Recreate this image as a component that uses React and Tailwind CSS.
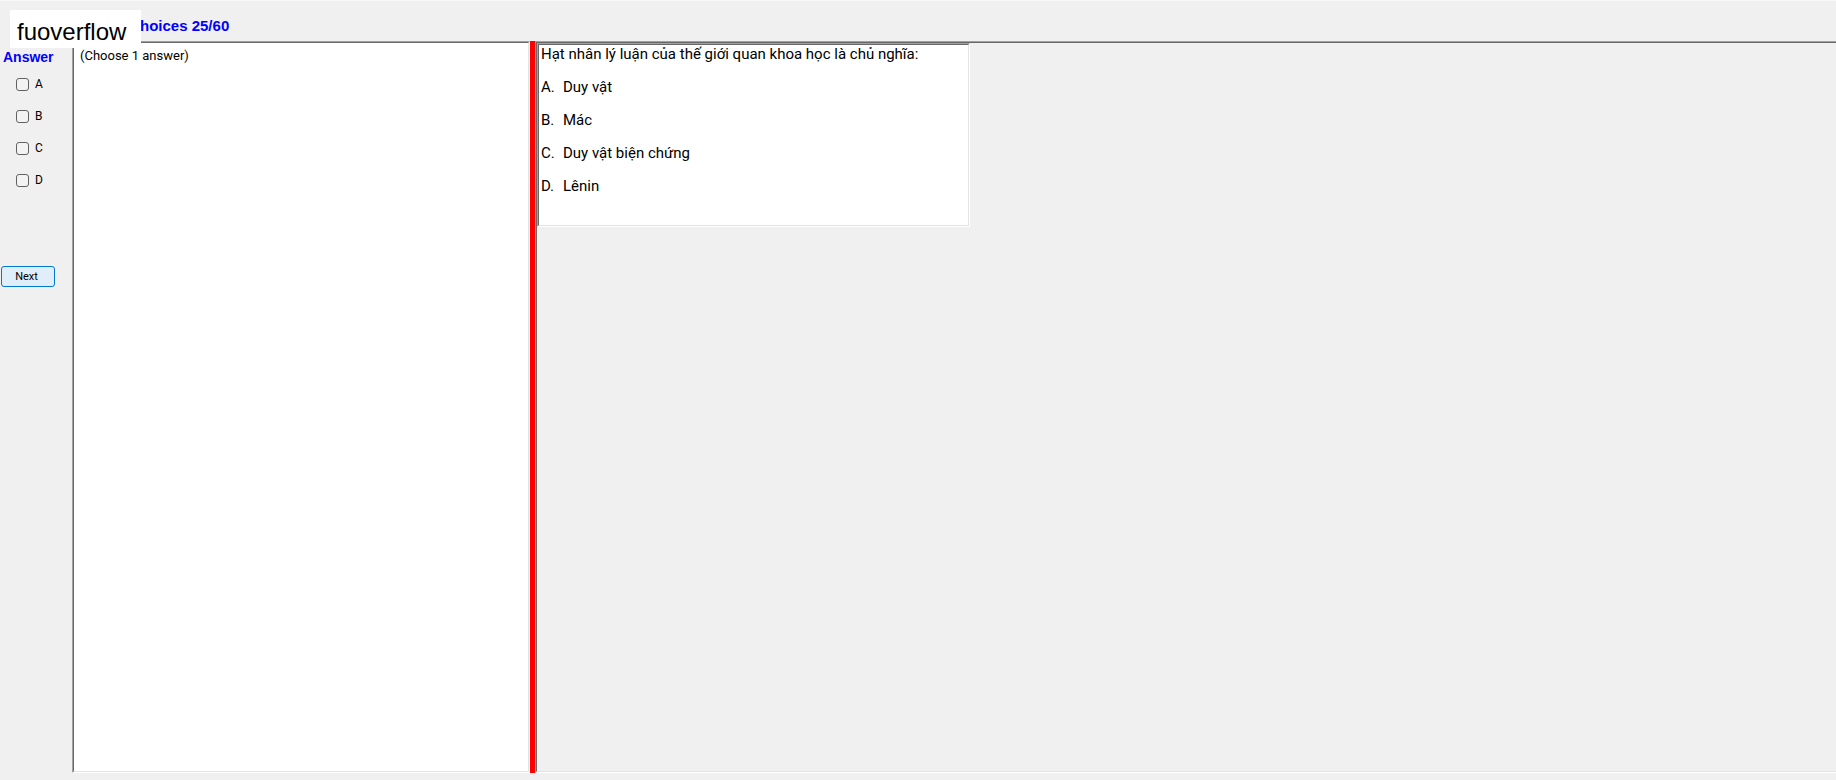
import React, { useState } from 'react';

const CHOICES = ['A', 'B', 'C', 'D'];

const QUESTION = {
  hint: '(Choose 1 answer)',
  text: 'Hạt nhân lý luận của thế giới quan khoa học là chủ nghĩa:',
  options: [
    { key: 'A', text: 'Duy vật' },
    { key: 'B', text: 'Mác' },
    { key: 'C', text: 'Duy vật biện chứng' },
    { key: 'D', text: 'Lênin' }
  ]
};

const App = () => {
  const [checked, setChecked] = useState([]);

  const toggle = (key) => {
    setChecked(checked.includes(key) ? checked.filter(k => k !== key) : [...checked, key]);
  };

  return (
    <div className="relative flex min-h-screen flex-col bg-[#f0f0f0] pb-[7px] font-[Roboto,Arial,sans-serif] text-black">
      {/* Header */}
      <header className="flex h-[41px] items-center border-t border-[#f8f8f8] pl-[140px] pt-[10px] font-['Liberation_Sans',Arial,sans-serif]">
        <h1 className="whitespace-nowrap text-[15px] font-bold leading-5 text-[#0000ff]">hoices 25/60</h1>
      </header>

      {/* Watermark */}
      <div className="absolute left-[10px] top-[10px] flex h-[38px] w-[131px] items-center bg-white pl-[7px] pt-[6px] font-['Liberation_Sans',Arial,sans-serif] text-2xl">
        fuoverflow
      </div>

      <div className="flex flex-1">
        {/* Answer column */}
        <aside className="flex w-[72px] shrink-0 flex-col">
          <h2 className="pl-[3px] pt-[6px] font-['Liberation_Sans',Arial,sans-serif] text-[14px] font-bold leading-5 text-[#0000ff]">
            Answer
          </h2>
          <div className="flex flex-col gap-3 pl-4 pt-[7px]">
            {CHOICES.map(key => (
              <label key={key} className="flex h-5 items-center gap-[6px] text-[12px]">
                <input
                  type="checkbox"
                  checked={checked.includes(key)}
                  onChange={() => toggle(key)}
                  className="size-[13px] appearance-none rounded-[3px] border border-[#626262] bg-[#f3f3f3] checked:bg-[#0067c0]"
                />
                {key}
              </label>
            ))}
          </div>
          <button
            type="button"
            className="ml-px mt-[76px] h-[21px] w-[54px] rounded-[3px] border border-[#0078d4] bg-[#e0eef9] pr-[3px] text-[11px] leading-4"
          >
            Next
          </button>
        </aside>

        <main className="grid flex-1 grid-cols-[458fr_5px_1301fr]">
          {/* Instruction pane */}
          <section className="flex border border-[#a0a0a0] border-b-white border-r-white bg-white">
            <p className="flex-1 border border-[#696969] border-b-[#e3e3e3] border-r-[#e3e3e3] pl-[6px] pt-[3px] text-[13px] leading-5">
              {QUESTION.hint}
            </p>
          </section>

          {/* Splitter */}
          <div className="bg-[#ff0000]" />

          {/* Question pane */}
          <section className="flex border-b border-l border-t border-[#a0a0a0] border-b-white">
            <div className="flex-1 border-b border-l border-t border-[#696969] border-b-[#e3e3e3]">
              <div className="max-w-[433px] border border-[#a0a0a0] border-b-white border-r-white bg-white">
                <div className="border border-[#696969] border-b-[#e3e3e3] border-r-[#e3e3e3] pb-[22px] pl-[2px] text-[15px] leading-[33px]">
                  <p className="mb-2 leading-[18px]">{QUESTION.text}</p>
                  <ul>
                    {QUESTION.options.map(option => (
                      <li key={option.key} className="flex">
                        <span className="w-[22px]">{option.key}.</span>
                        <span>{option.text}</span>
                      </li>
                    ))}
                  </ul>
                </div>
              </div>
            </div>
          </section>
        </main>
      </div>
    </div>
  );
};

export default App;
